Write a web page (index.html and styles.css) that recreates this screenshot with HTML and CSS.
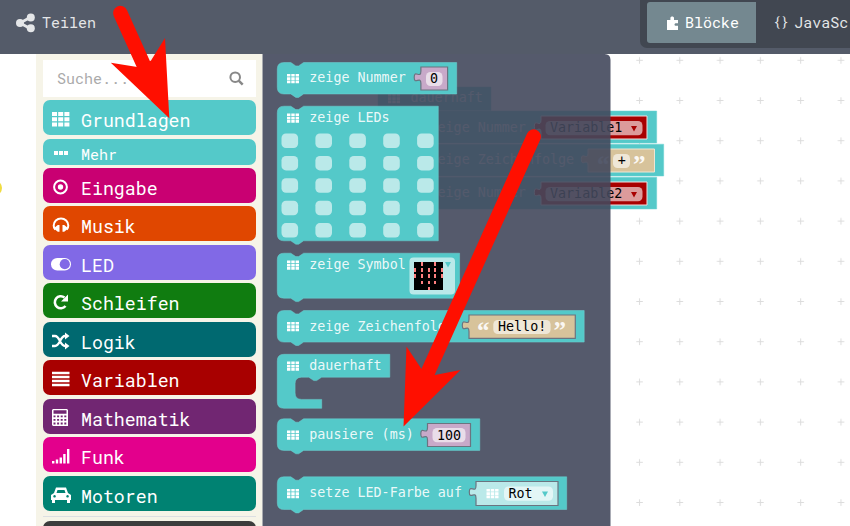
FILE: index.html
```html
<!DOCTYPE html>
<html lang="de">
<head>
<meta charset="utf-8">
<title>Editor</title>
<link rel="stylesheet" href="styles.css">
</head>
<body>
<header class="topbar">
  <div class="share"><svg width="19" height="20" viewBox="0 0 19 20"><path d="M4 10 15 4M4 10l11 6" stroke="currentColor" stroke-width="2.6"/><g fill="currentColor"><circle cx="4" cy="10" r="4"/><circle cx="14.8" cy="4.5" r="4"/><circle cx="14.8" cy="15.3" r="4"/></g></svg><span>Teilen</span></div>
  <nav class="modes">
    <div class="mode active"><svg width="11" height="14" viewBox="0 0 11 14"><path fill="currentColor" d="M0 4h3.400V2C3.400 0 7 0 7 2v2h4v3.200H9c-2 0-2 2.600 0 2.600h2V14H0z"/></svg><span>Blöcke</span></div>
    <div class="mode code"><span class="braces">{}</span><span>JavaSc</span></div>
  </nav>
</header>
<main class="editor">
  <aside class="simulator"><i></i></aside>
  <aside class="toolbox">
    <div class="search"><span>Suche...</span><svg width="15" height="15" viewBox="0 0 15 15" fill="none" stroke="#888" stroke-width="2"><circle cx="6.2" cy="6.2" r="4.8"/><path d="m9.700 9.700 4 4" stroke-width="2.500"/></svg></div>
    <div class="cat basic"><svg viewBox="0 0 20 20"><g fill="currentColor"><path d="M1 3h5v4H1zM7.200 3h5v4h-5zM13.400 3h5v4h-5zM1 8.200h5v4H1zM7.200 8.200h5v4h-5zM13.400 8.200h5v4h-5zM1 13.400h5v4H1zM7.200 13.400h5v4h-5zM13.400 13.400h5v4h-5z"/></g></svg><span>Grundlagen</span></div>
    <div class="cat more"><svg viewBox="0 0 20 20"><path fill="currentColor" d="M3 8h4v4H3zM8 8h4v4H8zM13 8h4v4h-4z"/></svg><span>Mehr</span></div>
    <div class="cat input"><svg viewBox="0 0 20 20"><circle cx="9.500" cy="10" r="6.400" fill="none" stroke="currentColor" stroke-width="2"/><circle cx="9.500" cy="10" r="2.700" fill="currentColor"/></svg><span>Eingabe</span></div>
    <div class="cat music"><svg viewBox="0 0 20 20"><path d="M4.200 14.500C2.700 13 2.700 11.500 2.700 10.500A7.300 7 0 0 1 17.300 10.500C17.300 11.500 17.300 13 15.800 14.500" fill="none" stroke="currentColor" stroke-width="2"/><path d="M8.500 10v6.700H6.800L4 14.500v-2.200L6.800 10zM11.500 10v6.700h1.700l2.800-2.200v-2.200L13.200 10z" fill="currentColor"/></svg><span>Musik</span></div>
    <div class="cat led"><svg viewBox="0 0 20 20"><rect y="4" width="20" height="12.500" rx="6.200" fill="currentColor"/><circle cx="13.800" cy="10.200" r="5.100" fill="#8169e6"/></svg><span>LED</span></div>
    <div class="cat loops"><svg viewBox="0 0 20 20"><path d="M14.500 14A6 6 0 1 1 13.500 5.500" fill="none" stroke="currentColor" stroke-width="2.600"/><path d="M17 2.500v7h-7z" fill="currentColor"/></svg><span>Schleifen</span></div>
    <div class="cat logic"><svg viewBox="0 0 20 20"><path d="M1 5h3c5 0 5 10 10 10h1M1 15h3c5 0 5-10 10-10h1" fill="none" stroke="currentColor" stroke-width="2.300"/><path d="m14 1.500 4.500 3.500L14 8.500zM14 11.500l4.500 3.500-4.500 3.500z" fill="currentColor"/></svg><span>Logik</span></div>
    <div class="cat vars"><svg viewBox="0 0 20 20"><path d="M1 4h17.500M1 8h17.500M1 12h17.500M1 16h17.500" stroke="currentColor" stroke-width="2.400"/></svg><span>Variablen</span></div>
    <div class="cat math"><svg viewBox="0 0 20 20"><path fill="currentColor" fill-rule="evenodd" d="M2 1h14l1 1v16H2l-1-1V2zM2.500 2.200v3.600h13V2.200zM2.500 7.400v1.800h2V7.400zM6.100 7.400v1.800h2V7.400zM9.700 7.400v1.800h2V7.400zM13.300 7.400v1.800h2V7.400zM2.500 11v1.800h2V11zM6.100 11v1.800h2V11zM9.700 11v1.800h2V11zM13.300 11v1.800h2V11zM2.500 14.600v1.800h2v-1.800zM6.100 14.600v1.800h2v-1.800zM9.700 14.600v1.800h2v-1.800zM13.300 14.600v1.800h2v-1.800z"/></svg><span>Mathematik</span></div>
    <div class="cat radio"><svg viewBox="0 0 20 20"><path fill="currentColor" d="M1 15h2.400v2.500H1zM4.800 13.500h2.400v4H4.800zM8.600 11.500H11v6H8.600zM12.200 8h2.400v9.500h-2.400zM16 3h2.400v14.500H16z"/></svg><span>Funk</span></div>
    <div class="cat motors"><svg viewBox="0 0 20 20"><path fill="currentColor" fill-rule="evenodd" d="M5 2.500h10l2 5.500 3 2v5h-1v3h-3v-3H4v3H1v-3H0v-5l3-2zM6.500 5l-1 3h9l-1-3zM3.500 10a1.300 1.300 0 1 0 .1 0zM16.500 10a1.300 1.300 0 1 0 .1 0z"/></svg><span>Motoren</span></div>
    <hr>
    <div class="cat advanced"></div>
  </aside>
  <section class="workspace">
    <svg class="blocks" width="587" height="472" viewBox="263 54 587 472">
      <defs>
        <pattern id="grid" x="619.300" y="40.200" width="40.300" height="40.200" patternUnits="userSpaceOnUse"><path d="M17 20.100h6.500M20.200 17v6.500" stroke="#dcdcdc" stroke-width="1"/></pattern>
        <g id="cells"><path fill="#fff" d="M0 0h3.400v2.600H0zM4.300 0h3.400v2.600H4.300zM8.600 0H12v2.600H8.600zM0 3.300h3.400v2.600H0zM4.300 3.300h3.400v2.600H4.300zM8.600 3.300H12v2.600H8.600zM0 6.600h3.400v2.600H0zM4.300 6.600h3.400v2.600H4.300zM8.600 6.600H12v2.600H8.600z"/></g>
        <g id="leds"><rect width="16.600" height="14.500" rx="4.500"/><rect x="33.900" width="16.600" height="14.500" rx="4.500"/><rect x="67.800" width="16.600" height="14.500" rx="4.500"/><rect x="101.700" width="16.600" height="14.500" rx="4.500"/><rect x="135.600" width="16.600" height="14.500" rx="4.500"/></g>
      </defs>
      <rect x="611" y="54" width="239" height="472" fill="url(#grid)"/>
      <g class="teal">
        <path d="M378 87h113v23.500h-95V209h27v9h-45z"/>
        <path d="M396 111h260.700v32H396z"/><path d="M396 144.200h267.700v31.800H396z"/><path d="M396 177.200h260.700V209H396z"/>
      </g>
      <use href="#cells" x="388" y="94"/>
      <text class="light" x="410.500" y="102">dauerhaft</text>
      <text class="light" x="429.500" y="131.500">zeige Nummer</text>
      <text class="light" x="429.500" y="164.300">zeige Zeichenfolge</text>
      <text class="light" x="429.500" y="197.300">zeige Nummer</text>
      <g fill="#a80000" stroke="#f2dede">
        <path id="var" d="M647 116v23H541v-6.500c0-8.300-6.700 2.100-6.700-6.200s6.700 2.100 6.700-6.200V116z"/>
        <use href="#var" y="66"/>
      </g>
      <g fill="#dc9b9b"><rect x="545.500" y="121" width="97" height="14.300" rx="4.500"/><rect x="545.500" y="187" width="97" height="14.300" rx="4.500"/></g>
      <text x="550" y="132.300">Variable1</text><text x="550" y="198.300">Variable2</text>
      <path d="M631 126h6l-3 5.500zM631 192h6l-3 5.500z" fill="#a80000"/>
      <path fill="#d7c39b" stroke="#eee5d3" d="M654.500 149v23H588v-6.500c0-8.300-6.700 2.100-6.700-6.200s6.700 2.100 6.700-6.200V149z"/>
      <rect x="613" y="154" width="17" height="14" rx="4.500" fill="#efe7d7"/>
      <text x="617.800" y="165">+</text>
      <text class="quote" x="597" y="172.500">“</text><text class="quote" x="633" y="172.500">”</text>

      <path d="M263 54h341.500q6 0 6 6v466H263z" fill="#42485c" fill-opacity=".9"/>

      <g class="teal">
        <path d="M283.800 62.500h7l5 3.400h2.800l5-3.400h153.100V94H303.600l-5 3.400h-2.800l-5-3.400h-7q-6.500 0-6.500-6.500V69q0-6.500 6.500-6.500z"/>
        <path d="M283.800 106.200h7l5 3.400h2.800l5-3.400h134.700v134.600H303.600l-5 3.400h-2.800l-5-3.400h-7q-6.500 0-6.500-6.500V112.700q0-6.500 6.500-6.500z"/>
        <path d="M283.800 253.200h7l5 3.400h2.800l5-3.400h156v45H303.600l-5 3.400h-2.800l-5-3.400h-7q-6.500 0-6.500-6.500v-32q0-6.500 6.500-6.500z"/>
        <path d="M283.800 310.500h7l5 3.400h2.800l5-3.400h280.600v31.600H303.600l-5 3.400h-2.800l-5-3.400h-7q-6.500 0-6.500-6.500V317q0-6.500 6.500-6.500z"/>
        <path d="M283.800 354.300h106v22.900h-68.200l-5 3.400h-2.800l-5-3.400h-7.200q-6.500 0-6.500 6.500v9.200q0 6.500 6.500 6.500h20.100v8.900h-37.900q-6.500 0-6.500-6.500v-41q0-6.500 6.500-6.500z"/>
        <path d="M283.800 418.800h7l5 3.400h2.800l5-3.400h176.200v31.600H303.600l-5 3.400h-2.800l-5-3.400h-7q-6.500 0-6.500-6.500v-18.600q0-6.500 6.500-6.500z"/>
        <path d="M283.800 476.800h7l5 3.400h2.800l5-3.400h263.100v32.700H303.600l-5 3.400h-2.800l-5-3.400h-7q-6.500 0-6.500-6.500v-19.700q0-6.500 6.500-6.500z"/>
      </g>
      <use href="#cells" x="287" y="74"/><use href="#cells" x="287" y="113.500"/><use href="#cells" x="287" y="260.500"/><use href="#cells" x="287" y="322"/><use href="#cells" x="287" y="361.500"/><use href="#cells" x="287" y="430.500"/><use href="#cells" x="287" y="489"/>
      <text class="light" x="309.300" y="82.300">zeige Nummer</text>
      <text class="light" x="309.300" y="122.300">zeige LEDs</text>
      <text class="light" x="309.300" y="268.500">zeige Symbol</text>
      <text class="light" x="309.300" y="330.500">zeige Zeichenfolge</text>
      <text class="light" x="309.300" y="370.300">dauerhaft</text>
      <text class="light" x="309.300" y="439.300">pausiere (ms)</text>
      <text class="light" x="309.300" y="497.300">setze LED-Farbe auf</text>
      <g fill="#bae9e9"><use href="#leds" x="281.500" y="133.500"/><use href="#leds" x="281.500" y="155.900"/><use href="#leds" x="281.500" y="178.300"/><use href="#leds" x="281.500" y="200.700"/><use href="#leds" x="281.500" y="223.100"/></g>

      <path class="plug" fill="#c8a9c9" d="M447.600 67v23h-26.700v-6.500c0-8.300-6.700 2.100-6.700-6.200s6.700 2.100 6.700-6.200V67z"/>
      <rect x="426" y="72" width="16.500" height="14" rx="4.500" fill="#e9dde9"/><text x="430" y="83.300">0</text>

      <rect x="409.500" y="257.500" width="45.500" height="37" rx="4" fill="#bae9e9"/>
      <rect x="414" y="262" width="29" height="28" fill="#000"/>
      <path fill="#ff8080" d="M421 262h2v4h-2zM434 262h2v4h-2zM414 268h2v4h-2zM421 268h2v4h-2zM428 268h2v4h-2zM434 268h2v4h-2zM441 268h2v4h-2zM414 274h2v4h-2zM421 274h2v4h-2zM428 274h2v4h-2zM434 274h2v4h-2zM441 274h2v4h-2zM421 281h2v3h-2zM428 281h2v3h-2zM434 281h2v3h-2zM428 287h2v3h-2z"/>
      <path fill="#54c9c9" d="M445 262h6l-3 5.500z"/>

      <path class="plug" fill="#d7c39b" d="M575.300 315v23.300H469v-6.800c0-8.300-6.700 2.100-6.700-6.200s6.700 2.100 6.700-6.200V315z"/>
      <rect x="493.300" y="320" width="57.300" height="14" rx="4.500" fill="#efe7d7"/><text x="498" y="331.300">Hello!</text>
      <text class="quote" x="477" y="338.500">“</text><text class="quote" x="553.500" y="338.500">”</text>

      <path class="plug" fill="#c8a9c9" d="M470.500 423.500v23h-43V440c0-8.300-6.700 2.100-6.700-6.200s6.700 2.100 6.700-6.200v-4.100z"/>
      <rect x="432.500" y="428" width="33" height="14.300" rx="4.500" fill="#e9dde9"/><text x="437" y="439.500">100</text>

      <path class="plug" fill="#bae9e9" d="M558 481.500v24h-82v-7.300c0-8.300-6.700 2.100-6.700-6.200s6.700 2.100 6.700-6.200v-4.300z"/>
      <use href="#cells" x="486.500" y="489"/>
      <rect x="504" y="486.500" width="49" height="14.300" rx="4.500" fill="#e3f6f6"/><text x="508.500" y="498.300">Rot</text>
      <path fill="#54c9c9" d="M542 491.500h6l-3 5.500z"/>
    </svg>
  </section>
</main>
<svg class="arrows" width="850" height="526" viewBox="0 0 850 526">
  <g stroke="#ff0f00" stroke-width="14.500" stroke-linecap="round"><path d="M120.300 13 146 70"/><path d="M533.700 136.500 428 372"/></g>
  <path fill="#ff0f00" d="m169.300 118.300-58.500-55.500 26.500 4.200L151 60.500 165 38zM403.500 426.500l3-80 15 22.500 13.500 6 25.500-5z"/>
</svg>
</body>
</html>
```
FILE: styles.css
```css
* { box-sizing: border-box; }
body {
  margin: 0;
  width: 850px;
  height: 526px;
  overflow: hidden;
  background: #fff;
  font-family: "Roboto Mono", "DejaVu Sans Mono", monospace;
  font-size: 15px;
}
svg { display: block; flex: none; }
.topbar {
  display: flex;
  justify-content: space-between;
  height: 54px;
  background: #545b69;
  color: #e4e6e8;
}
.share { display: flex; align-items: center; gap: 7px; height: 45px; padding-left: 16px; }
.share span, .mode span { padding-bottom: 2px; }
.modes {
  display: flex;
  width: 210px;
  height: 48px;
  padding: 2px 0 5px 7px;
  overflow: hidden;
  background: #414751;
  border-radius: 0 0 0 7px;
}
.mode { display: flex; flex: none; align-items: center; height: 41px; }
.active { width: 109px; padding-left: 20px; gap: 7px; color: #fff; background: #748890; border-radius: 3px 0 0 3px; }
.code { padding-left: 17px; gap: 6px; }
.braces { font-size: 13.5px; letter-spacing: -.5px; }
.editor { display: flex; height: 472px; }
.simulator { width: 36px; flex: none; padding-top: 126px; overflow: hidden; }
.simulator i { display: block; width: 16px; height: 16px; margin-left: -14px; border-radius: 50%; background: #f0dc41; }
.toolbox {
  width: 227px;
  flex: none;
  padding: 6px 6px 0 7px;
  overflow: hidden;
  background: #f6f4e8;
  border-right: 1px solid #a9abb0;
}
.search {
  display: flex;
  align-items: center;
  justify-content: space-between;
  height: 37px;
  margin-bottom: 3px;
  padding: 0 12px 0 14px;
  background: #fff;
  color: #aaa;
}
.search span { padding-bottom: 2px; }
.cat {
  display: flex;
  align-items: center;
  gap: 10px;
  height: 35px;
  margin-bottom: 3.55px;
  padding: 5px 0 0 8px;
  border-radius: 7px;
  color: #fff;
  font-size: 18.25px;
}
.cat svg { width: 20px; height: 20px; margin-top: -2px; }
.basic, .more { background: #54c9c9; }
.more { height: 26px; margin-bottom: 3px; font-size: 15px; }
.input { background: #c90072; }
.music { background: #e04700; }
.led { background: #8169e6; }
.loops { background: #107c10; }
.logic { background: #006970; }
.vars { background: #a80000; }
.math { background: #712672; }
.radio { background: #e3008c; }
.motors { background: #008272; }
.toolbox hr { height: 1px; margin: 5px 0 4.5px; border: 0; background: #dcdfe2; }
.advanced { background: #3c3c3c; }
.workspace { width: 587px; flex: none; }
.blocks text { font: 13.35px "DejaVu Sans Mono", monospace; fill: #000; white-space: pre; }
.blocks .light { fill: #fff; fill-opacity: .9; }
.blocks .quote { font: bold 25px "Liberation Serif", serif; fill: #fff; fill-opacity: .9; }
.teal { fill: #54c9c9; stroke: #6fd2d2; stroke-width: .5; }
.plug { stroke: #6b7480; stroke-width: 1.2; }
.arrows { position: absolute; top: 0; left: 0; pointer-events: none; }
```
